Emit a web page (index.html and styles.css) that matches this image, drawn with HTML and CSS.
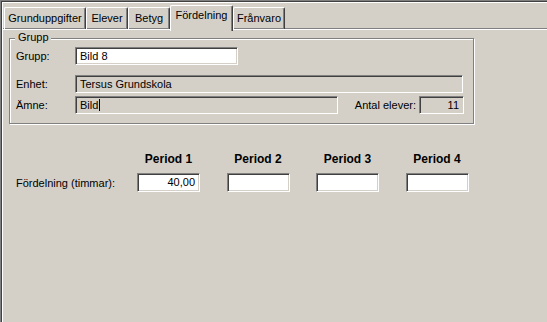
FILE: index.html
```html
<!DOCTYPE html>
<html lang="sv">
<head>
<meta charset="utf-8">
<title>Grupp - Fördelning</title>
<link rel="stylesheet" href="styles.css">
</head>
<body>
<div class="frame">
	<div class="tabs">
		<div class="tab t_grund">Grunduppgifter</div>
		<div class="tab t_elever">Elever</div>
		<div class="tab t_betyg">Betyg</div>
		<div class="tab t_ford sel">Fördelning</div>
		<div class="tab t_franvaro">Frånvaro</div>
	</div>
	<div class="panel">
		<div class="group">
			<span class="legend">Grupp</span>
			<div class="row r_grupp">
				<span class="lbl">Grupp:</span>
				<div class="field white w_grupp">Bild 8</div>
			</div>
			<div class="row r_enhet">
				<span class="lbl">Enhet:</span>
				<div class="field w_enhet">Tersus Grundskola</div>
			</div>
			<div class="row r_amne">
				<span class="lbl">Ämne:</span>
				<div class="field w_amne">Bild<span class="caret"></span></div>
				<span class="lbl_antal">Antal elever:</span>
				<div class="field num w_antal">11</div>
			</div>
		</div>

		<div class="periods">
			<span></span>
			<span class="phead">Period 1</span>
			<span class="phead">Period 2</span>
			<span class="phead">Period 3</span>
			<span class="phead">Period 4</span>
			<span class="plbl">Fördelning (timmar):</span>
			<div class="field white num pfield">40,00</div>
			<div class="field white num pfield"></div>
			<div class="field white num pfield"></div>
			<div class="field white num pfield"></div>
		</div>
	</div>
</div>
</body>
</html>
```

FILE: styles.css
```css
* { box-sizing: border-box; }

body {
	margin: 0;
	background: #d4d0c8;
	color: #000;
	font: 11px "Liberation Sans", Arial, sans-serif;
	overflow: hidden;
}

/* sunken outer frame: gray, dark, white */
.frame {
	height: 322px;
	padding: 3px 0 0 3px;
	box-shadow: inset 1px 1px 0 #808080, inset 2px 2px 0 #404040, inset 3px 3px 0 #fff;
}

.tabs {
	display: flex;
	align-items: flex-end;
	height: 26px;
	padding-left: 1px;
}

.tab {
	height: 22px;
	padding-top: 4px;
	line-height: 13px;
	text-align: center;
	border-top: 1px solid #fff;
	border-left: 1px solid #fff;
	border-right: 1px solid #404040;
	border-radius: 2px 2px 0 0;
	box-shadow: inset -1px 0 0 #808080;
	white-space: nowrap;
}
.t_grund { width: 82px; }
.t_elever { width: 42px; }
.t_betyg { width: 42px; }
.t_ford { width: 63px; }
.t_franvaro { width: 52px; }

.tab.sel {
	position: relative;
	z-index: 1;
	height: 26px;
	margin-bottom: -2px;
	padding-top: 3px;
	background: #d4d0c8;
}

.panel {
	border-top: 1px solid #fff;
	box-shadow: 0 -1px 0 #808080;
	padding: 8px 0 0 6px;
}

/* etched group box */
.group {
	position: relative;
	width: 465px;
	padding: 8px 9px 9px 6px;
	border: 1px solid #808080;
	box-shadow: inset 1px 1px 0 #fff, 1px 1px 0 #fff;
}
.legend {
	position: absolute;
	left: 5px;
	top: -8px;
	padding: 0 2px 0 3px;
	line-height: 13px;
	background: #d4d0c8;
}

.row {
	display: flex;
	align-items: center;
	height: 18px;
}
.r_enhet { margin-top: 10px; }
.r_amne { margin-top: 3px; }
.lbl { width: 59px; }
.lbl_antal { margin-left: auto; margin-right: 3px; }

/* sunken edit field */
.field {
	height: 18px;
	padding: 0 4px;
	line-height: 16px;
	border: 1px solid;
	border-color: #808080 #fff #fff #808080;
	box-shadow: inset 1px 1px 0 #404040, inset -1px -1px 0 #d4d0c8;
	white-space: nowrap;
}
.field.white { background: #fff; }
.field.num { text-align: right; }
.w_grupp { width: 163px; }
.w_enhet { width: 388px; }
.w_amne { width: 263px; }
.w_antal { width: 45px; }

.caret {
	display: inline-block;
	width: 1px;
	height: 12px;
	margin-left: 1px;
	vertical-align: -2px;
	background: #000;
}

.periods {
	display: grid;
	grid-template-columns: 94.5px repeat(4, 63px);
	column-gap: 26.5px;
	row-gap: 7px;
	align-items: center;
	margin: 28px 0 0 7px;
}
.plbl { white-space: nowrap; }
.phead {
	font-weight: bold;
	font-size: 12px;
	line-height: 14px;
	text-align: center;
}
.pfield { height: 19px; line-height: 17px; }
```
